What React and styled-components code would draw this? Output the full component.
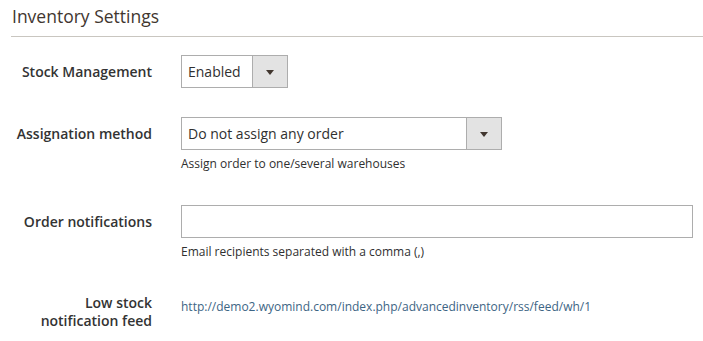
import styled, { createGlobalStyle } from "styled-components";

const GlobalStyle = createGlobalStyle`
  body {
    margin: 0;
    background: #fff;
    font-family: "Open Sans", "Liberation Sans", sans-serif;
    color: #303030;
  }
`;

const Page = styled.div`
  padding-left: 11px;
`;

const Title = styled.h2`
  margin: 0;
  padding: 6px 0 10px 1px;
  font-size: 17.5px;
  line-height: 20px;
  font-weight: 400;
  color: #41362f;
  border-bottom: 1px solid #c9c6c0;
`;

const Form = styled.div`
  padding-top: 18px;
`;

const Row = styled.div`
  display: grid;
  grid-template-columns: 141px 1fr;
  column-gap: 29px;
  margin-bottom: ${(p) => p.$space || 0}px;
`;

const Label = styled.div`
  padding-top: 8px;
  text-align: right;
  font-size: 14px;
  line-height: 18px;
  font-weight: 600;
  color: #333;
`;

const Control = styled.div`
  display: flex;
  flex-direction: column;
  align-items: flex-start;
`;

const SelectBox = styled.div`
  display: flex;
  width: ${(p) => p.$width}px;
  height: 33px;
  box-sizing: border-box;
  border: 1px solid #adadad;
  background: #fff;
`;

const SelectValue = styled.span`
  flex: 1;
  padding: 0 6px;
  font-size: 14px;
  line-height: 31px;
  color: #303030;
  white-space: nowrap;
`;

const SelectButton = styled.span`
  width: 34px;
  border-left: 1px solid #adadad;
  background: #e3e3e3;
  display: flex;
  align-items: center;
  justify-content: center;

  &::after {
    content: "";
    border-left: 4px solid transparent;
    border-right: 4px solid transparent;
    border-top: 5px solid #41362f;
    margin-top: 1px;
  }
`;

const TextInput = styled.input`
  width: 512px;
  height: 33px;
  box-sizing: border-box;
  border: 1px solid #adadad;
  margin: 0;
  padding: 0 6px;
  font-family: inherit;
  font-size: 14px;
  outline: none;
`;

const Note = styled.div`
  margin-top: 5px;
  font-size: 12px;
  line-height: 18px;
  color: #303030;
`;

const FeedLink = styled.a`
  padding-top: 11px;
  font-size: 12px;
  line-height: 19px;
  color: #3d6584;
  text-decoration: none;
`;

function Select({ width, value }) {
  return (
    <SelectBox $width={width}>
      <SelectValue>{value}</SelectValue>
      <SelectButton />
    </SelectBox>
  );
}

export default function App() {
  return (
    <>
      <GlobalStyle />
      <Page>
        <Title>Inventory Settings</Title>
        <Form>
          <Row $space={29}>
            <Label>Stock Management</Label>
            <Control>
              <Select width={107} value="Enabled" />
            </Control>
          </Row>
          <Row $space={32}>
            <Label>Assignation method</Label>
            <Control>
              <Select width={321} value="Do not assign any order" />
              <Note>Assign order to one/several warehouses</Note>
            </Control>
          </Row>
          <Row $space={25}>
            <Label>Order notifications</Label>
            <Control>
              <TextInput type="text" />
              <Note>Email recipients separated with a comma (,)</Note>
            </Control>
          </Row>
          <Row>
            <Label>
              Low stock
              <br />
              notification feed
            </Label>
            <Control>
              <FeedLink href="#">
                http://demo2.wyomind.com/index.php/advancedinventory/rss/feed/wh/1
              </FeedLink>
            </Control>
          </Row>
        </Form>
      </Page>
    </>
  );
}
